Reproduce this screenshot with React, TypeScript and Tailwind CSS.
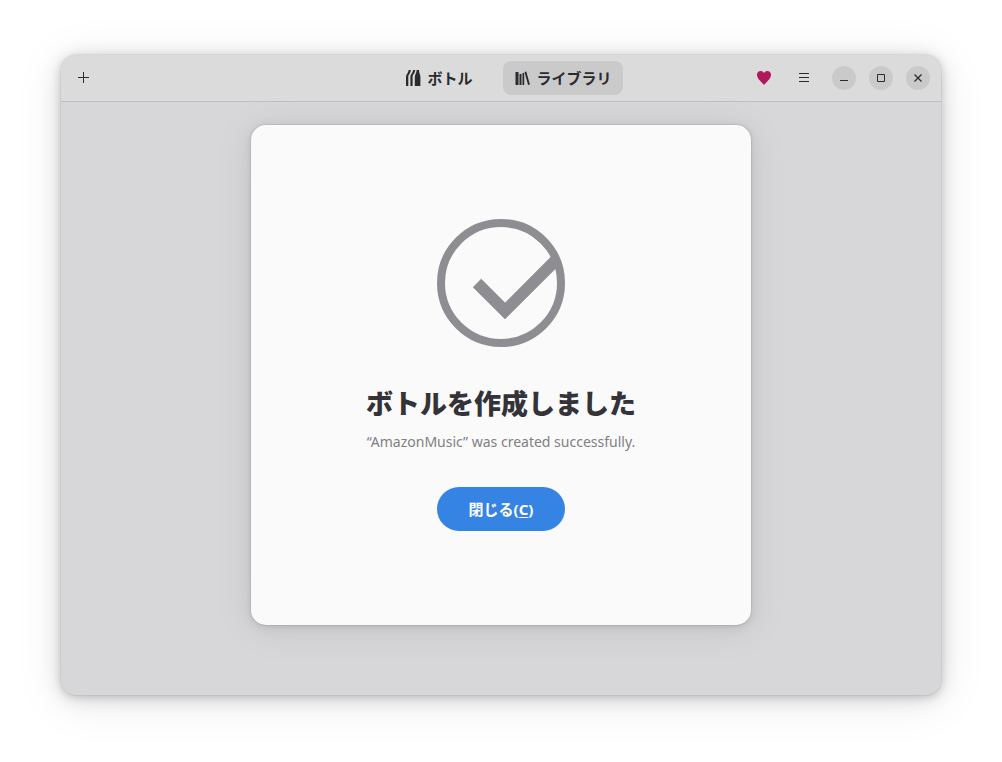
import type { ReactNode } from 'react';

const tabs = [
  { id: 'bottles', label: 'ボトル', icon: <BottlesIcon />, active: false },
  { id: 'library', label: 'ライブラリ', icon: <LibraryIcon />, active: true },
];

function BottlesIcon() {
  return (
    <svg className="size-4" viewBox="0 0 16 16" fill="currentColor" aria-hidden="true">
      <path d="M1 16V7C1 4 3.6 3 3.6 0H5.8C5.8 3.4 3.3 4.4 3.3 7V16Z" />
      <path d="M5.4 16V7C5.4 4 8 3 8 0H10.2C10.2 3.4 7.6 4.4 7.6 7V16Z" />
      <path d="M9.8 16V7C9.8 4.4 11.6 3.4 11.6 0H14C14 3.4 15.4 4.4 15.4 7V16Z" />
    </svg>
  );
}

function LibraryIcon() {
  return (
    <svg className="size-4" viewBox="0 0 16 16" fill="currentColor" aria-hidden="true">
      <path d="M1.5 2H4.5V15H1.5ZM5.5 4H7.5V15H5.5ZM8.5 3H10.2V15H8.5ZM10.5 2L12.3 1.5L15.9 14.5L14.1 15Z" />
    </svg>
  );
}

function SuccessIcon() {
  return (
    <svg className="size-32 text-[#8e8d92]" viewBox="0 0 128 128" fill="none" stroke="currentColor" aria-hidden="true">
      <circle cx="64" cy="64" r="60" strokeWidth="8" />
      <path d="M40 64L68 92L118 42" strokeWidth="11.8" />
    </svg>
  );
}

function HeaderButton({ label, children }: { label: string; children: ReactNode }) {
  return (
    <button type="button" aria-label={label} className="flex size-[34px] items-center justify-center rounded-lg">
      {children}
    </button>
  );
}

function WindowButton({ label, path, strokeWidth = 1 }: { label: string; path: string; strokeWidth?: number }) {
  return (
    <button type="button" aria-label={label} className="flex size-6 items-center justify-center rounded-full bg-[#cacaca]">
      <svg className="size-4" viewBox="0 0 16 16" fill="none" stroke="currentColor" aria-hidden="true">
        <path d={path} strokeWidth={strokeWidth} />
      </svg>
    </button>
  );
}

function HeaderBar() {
  return (
    <header className="grid grid-cols-[1fr_auto_1fr] items-center border-b border-[#bfbfc0] bg-[#dbdbdb] py-1.5 pr-[11px] pl-[5px]">
      <div className="flex">
        <HeaderButton label="新しいボトル">
          <svg className="size-4" viewBox="0 0 16 16" stroke="currentColor" aria-hidden="true">
            <path d="M3 7.5H14M8.5 2V13" />
          </svg>
        </HeaderButton>
      </div>

      <nav className="flex gap-1 pl-1.5">
        {tabs.map(tab => (
          <button
            key={tab.id}
            type="button"
            aria-pressed={tab.active}
            className={`flex h-[34px] w-[120px] items-center justify-center gap-1.5 rounded-lg text-[15px] font-bold ${tab.active ? 'bg-[#cacaca]' : ''}`}
          >
            {tab.icon}
            {tab.label}
          </button>
        ))}
      </nav>

      <div className="flex items-center justify-end">
        <div className="flex gap-1.5 pr-[11px]">
          <HeaderButton label="寄付">
            <svg className="size-4 text-[#b0185b]" viewBox="0 0 16 16" fill="currentColor" aria-hidden="true">
              <path d="M4.7 1C2.5 1 1 2.6 1 4.8C1 9 5.2 11.4 8 15C10.8 11.4 15 9 15 4.8C15 2.6 13.5 1 11.3 1C9.8 1 8.6 1.8 8 3C7.4 1.8 6.2 1 4.7 1Z" />
            </svg>
          </HeaderButton>
          <HeaderButton label="メニュー">
            <svg className="size-4" viewBox="0 0 16 16" stroke="currentColor" aria-hidden="true">
              <path d="M3 3.5H13M3 7.5H13M3 11.5H13" />
            </svg>
          </HeaderButton>
        </div>
        <div className="flex gap-[13px]">
          <WindowButton label="最小化" path="M4 10.5H12" />
          <WindowButton label="最大化" path="M4.5 4.5H11.5V11.5H4.5Z" />
          <WindowButton label="閉じる" path="M4.5 4.5L11.5 11.5M11.5 4.5L4.5 11.5" strokeWidth={1.3} />
        </div>
      </div>
    </header>
  );
}

function CreatedDialog() {
  return (
    <section
      role="dialog"
      aria-labelledby="created-title"
      className="flex min-h-[500px] w-full max-w-[500px] flex-col items-center justify-center rounded-[15px] bg-[#fafafa] shadow-[0_0_0_1px_rgba(0,0,0,0.05),0_1px_5px_rgba(0,0,0,0.09),0_2px_14px_rgba(0,0,0,0.07),0_4px_40px_rgba(0,0,0,0.08)]"
    >
      <SuccessIcon />
      <h1 id="created-title" className="mt-[37px] text-[27px] leading-10 font-black text-[#333338]">
        ボトルを作成しました
      </h1>
      <p className="mt-1.5 text-[14px] leading-6 text-[#808083]">“AmazonMusic” was created successfully.</p>
      <button type="button" className="mt-[33px] h-11 w-32 rounded-full bg-[#3584e4] text-[15px] font-bold text-white">
        閉じる(<span className="underline underline-offset-2">C</span>)
      </button>
    </section>
  );
}

export default function App() {
  return (
    <div className="flex min-h-screen bg-white px-[61px] pt-[55px] pb-[67px] font-['Noto_Sans','Noto_Sans_CJK_JP',sans-serif] text-[#2b2b2f]">
      <main className="relative flex flex-1 flex-col overflow-hidden rounded-[15px] bg-[#d7d7d9] shadow-[0_0_0_1px_rgba(0,0,0,0.04),0_2px_8px_rgba(0,0,0,0.15),0_3px_20px_rgba(0,0,0,0.14),0_6px_50px_rgba(0,0,0,0.09)]">
        <HeaderBar />
        <div className="absolute inset-0 flex items-center justify-center">
          <CreatedDialog />
        </div>
      </main>
    </div>
  );
}
